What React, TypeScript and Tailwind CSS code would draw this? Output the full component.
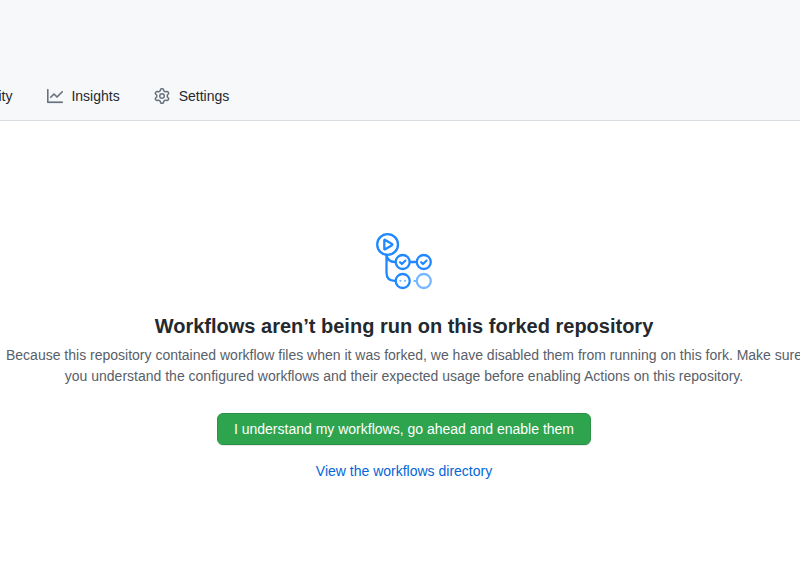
function GraphIcon() {
  return (
    <svg className="size-4" viewBox="0 0 16 16" fill="#6a737d" stroke="#6a737d" strokeWidth="0.2">
      <path
        fillRule="evenodd"
        d="M1.5 1.75a.75.75 0 00-1.5 0v12.5c0 .414.336.75.75.75h14.5a.75.75 0 000-1.5H1.5V1.75zm14.28 2.53a.75.75 0 00-1.06-1.06L10 7.94 7.53 5.47a.75.75 0 00-1.06 0L3.22 8.72a.75.75 0 001.06 1.06L7 7.06l2.47 2.47a.75.75 0 001.06 0l5.25-5.25z"
      />
    </svg>
  );
}

function GearIcon() {
  return (
    <svg className="size-4" viewBox="0 0 16 16" fill="#6a737d">
      <path
        fillRule="evenodd"
        d="M7.429 1.525a6.593 6.593 0 011.142 0c.036.003.108.036.137.146l.289 1.105c.147.56.55.967.997 1.189.174.086.341.183.501.29.417.278.97.423 1.53.27l1.102-.303c.11-.03.175.016.195.046.219.31.41.641.573.989.014.031.022.11-.059.19l-.815.806c-.411.406-.562.957-.53 1.456a4.588 4.588 0 010 .582c-.032.499.119 1.05.53 1.456l.815.806c.08.08.073.159.059.19a6.494 6.494 0 01-.573.99c-.02.029-.086.074-.195.045l-1.103-.303c-.559-.153-1.112-.008-1.529.27-.16.107-.327.204-.5.29-.449.222-.851.628-.998 1.189l-.289 1.105c-.029.11-.101.143-.137.146a6.613 6.613 0 01-1.142 0c-.036-.003-.108-.037-.137-.146l-.289-1.105c-.147-.56-.55-.967-.997-1.189a4.502 4.502 0 01-.501-.29c-.417-.278-.97-.423-1.53-.27l-1.102.303c-.11.03-.175-.016-.195-.046a6.492 6.492 0 01-.573-.989c-.014-.031-.022-.11.059-.19l.815-.806c.411-.406.562-.957.53-1.456a4.587 4.587 0 010-.582c.032-.499-.119-1.05-.53-1.456l-.815-.806c-.08-.08-.073-.159-.059-.19a6.44 6.44 0 01.573-.99c.02-.029.086-.075.195-.045l1.103.303c.559.153 1.112.008 1.529-.27.16-.107.327-.204.5-.29.449-.222.851-.628.998-1.189l.289-1.105c.029-.11.101-.143.137-.146zM8 0c-.236 0-.47.01-.701.03-.743.065-1.29.615-1.458 1.261l-.29 1.106c-.017.066-.078.158-.211.224a5.994 5.994 0 00-.668.386c-.123.082-.233.09-.3.071L3.27 2.776c-.644-.177-1.392.02-1.82.63a7.977 7.977 0 00-.704 1.217c-.315.675-.111 1.422.363 1.891l.815.806c.05.048.098.147.088.294a6.084 6.084 0 000 .772c.01.147-.038.246-.088.294l-.815.806c-.474.469-.678 1.216-.363 1.891.2.428.436.835.704 1.218.428.609 1.176.806 1.82.63l1.103-.303c.066-.019.176-.011.299.071.213.143.436.272.668.386.133.066.194.158.212.224l.289 1.106c.169.646.715 1.196 1.458 1.26a8.094 8.094 0 001.402 0c.743-.064 1.29-.614 1.458-1.26l.29-1.106c.017-.066.078-.158.211-.224a5.98 5.98 0 00.668-.386c.123-.082.233-.09.3-.071l1.102.302c.644.177 1.392-.02 1.82-.63.268-.382.505-.789.704-1.217.315-.675.111-1.422-.364-1.891l-.814-.806c-.05-.048-.098-.147-.088-.294a6.1 6.1 0 000-.772c-.01-.147.039-.246.088-.294l.814-.806c.475-.469.679-1.216.364-1.891a7.992 7.992 0 00-.704-1.218c-.428-.609-1.176-.806-1.82-.63l-1.103.303c-.066.019-.176.011-.299-.071a5.991 5.991 0 00-.668-.386c-.133-.066-.194-.158-.212-.224L10.16 1.29C9.99.645 9.444.095 8.701.031A8.094 8.094 0 008 0zm1.5 8a1.5 1.5 0 11-3 0 1.5 1.5 0 013 0zM11 8a3 3 0 11-6 0 3 3 0 016 0z"
      />
    </svg>
  );
}

function WorkflowIcon() {
  return (
    <svg
      className="h-[58px] w-[58px]"
      viewBox="375 232 58 58"
      fill="none"
      stroke="#2188ff"
      strokeWidth="2.3"
      strokeLinecap="round"
      strokeLinejoin="round"
    >
      <circle cx="387.6" cy="244.5" r="10.4" />
      <path d="M384.3 240.4v8.4q0 1 .9.5l6.8-4.1q.8-.6 0-1.1l-6.8-4.2q-.9-.5-.9.5z" />
      <path d="M386.5 255v17.5q0 8.3 8.3 8.3M386.5 255q1 6.9 8.3 7" />
      <circle cx="402.7" cy="262" r="7" />
      <circle cx="423.8" cy="262" r="7" />
      <path d="M410 262h6.5" />
      <path d="M400 262.2l1.9 1.9 3.6-3.6M421.1 262.2l1.9 1.9 3.6-3.6" strokeWidth="2.1" />
      <circle cx="402.7" cy="281" r="7" />
      <circle cx="423.8" cy="281" r="7" stroke="#79b8ff" />
      <path d="M414.3 281h2" stroke="#79b8ff" strokeWidth="2" />
      <path d="M400.4 280.8h.01M405 280.8h.01" stroke="#79b8ff" strokeWidth="2.2" />
    </svg>
  );
}

export default function App() {
  return (
    <div className="h-[587px] w-[800px] overflow-hidden bg-white font-['Liberation_Sans',Arial,sans-serif] text-[14px] leading-[21px] text-[#24292e]">
      <header className="flex h-[121px] items-end border-b border-[#d8dde2] bg-[#f6f8fa]">
        <nav className="flex h-12 items-center">
          <a className="-ml-[1.5px] w-[14.5px]">ity</a>
          <a className="ml-[34px] flex items-center gap-[8.4px]">
            <GraphIcon />
            Insights
          </a>
          <a className="ml-[34px] flex items-center gap-[9px]">
            <GearIcon />
            Settings
          </a>
        </nav>
      </header>
      <main className="-ml-px flex w-[810px] flex-col items-center pt-[111px] text-center">
        <WorkflowIcon />
        <h3 className="mt-[21px] text-[20px] leading-[30px] font-bold">
          Workflows aren’t being run on this forked repository
        </h3>
        <p className="mt-1 text-[#586069]">
          Because this repository contained workflow files when it was forked, we have disabled them from running on this fork. Make sure
          <br />
          you understand the configured workflows and their expected usage before enabling Actions on this repository.
        </p>
        <button className="mt-[26px] h-8 w-[374px] rounded-md border border-[#2a9147] bg-[#2ea44f] leading-5 text-white shadow-[0_1px_0_rgba(27,31,35,0.1)]">
          I understand my workflows, go ahead and enable them
        </button>
        <a className="mt-4 text-[#0366d6]">View the workflows directory</a>
      </main>
    </div>
  );
}
